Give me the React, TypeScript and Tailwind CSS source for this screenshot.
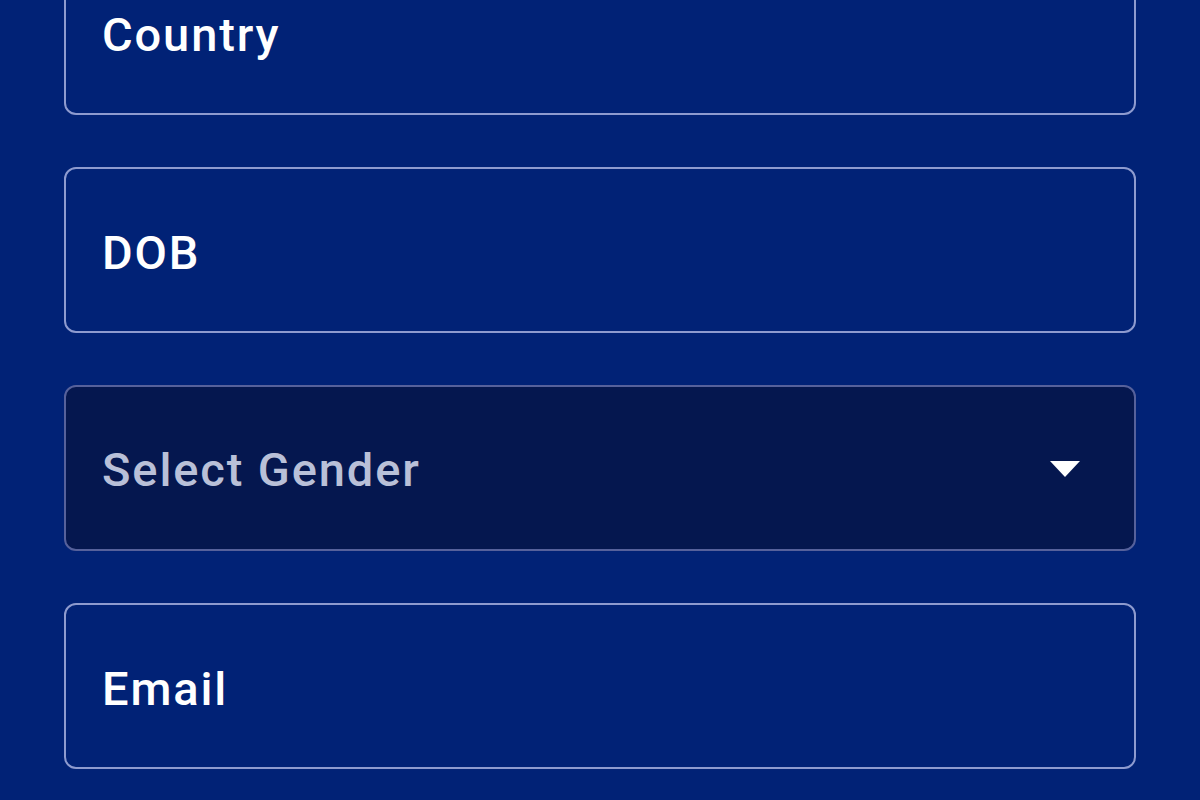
import { useState } from 'react';

const fieldClass =
    'w-full h-[166px] rounded-[12px] border-2 border-[#8e9bcf] bg-transparent pl-[36px] pr-8 pt-[4px] text-[47px] font-medium tracking-[0.04em] text-white placeholder:text-white focus:outline-none';

export default function App() {
    const [gender, setGender] = useState('');

    return (
        <div className="h-[800px] overflow-hidden bg-[#012276] font-['Roboto','Liberation_Sans',sans-serif]">
            <div className="-mt-[51px] px-[64px] flex flex-col gap-[52px]">
                {/* Country */}
                <input type="text" placeholder="Country" className={fieldClass} />

                {/* DOB */}
                <input type="text" placeholder="DOB" className={fieldClass} />

                {/* Gender */}
                <div className="relative">
                    <select
                        value={gender}
                        onChange={(e) => setGender(e.target.value)}
                        className="w-full h-[166px] appearance-none rounded-[12px] border-2 border-[#56619b] bg-[#05174f] pl-[36px] pr-24 pt-[4px] text-[47px] font-medium tracking-[0.04em] text-[#b9c0d8] focus:outline-none"
                    >
                        <option value="">Select Gender</option>
                        <option value="male">Male</option>
                        <option value="female">Female</option>
                        <option value="other">Other</option>
                    </select>
                    <svg
                        className="pointer-events-none absolute right-[56px] top-[76px]"
                        width="30"
                        height="16"
                        viewBox="0 0 30 16"
                    >
                        <path d="M0 0 H30 L15 16 Z" fill="#ffffff" />
                    </svg>
                </div>

                {/* Email */}
                <input type="email" placeholder="Email" className={fieldClass} />
            </div>
        </div>
    );
}
